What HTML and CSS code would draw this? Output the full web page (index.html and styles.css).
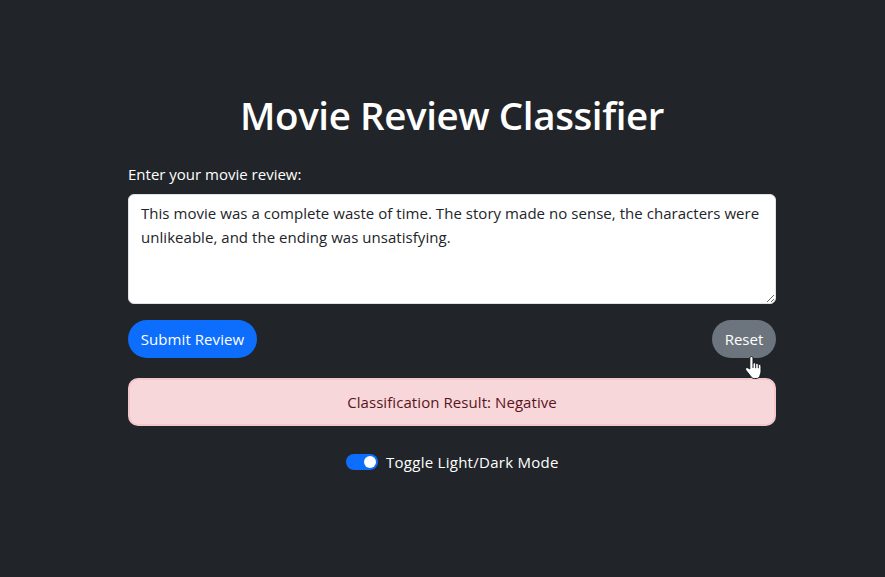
FILE: index.html
```html
<!DOCTYPE html>
<html lang="en">
<head>
<meta charset="utf-8">
<title>Movie Review Classifier</title>
<link rel="stylesheet" href="styles.css">
</head>
<body>
<main class="container">
  <h1>Movie Review Classifier</h1>
  <label class="form-label" for="review">Enter your movie review:</label>
  <textarea id="review" class="form-control" spellcheck="false">This movie was a complete waste of time. The story made no sense, the characters were unlikeable, and the ending was unsatisfying.</textarea>
  <div class="actions">
    <button class="btn primary" type="button">Submit Review</button>
    <button class="btn secondary" type="button">Reset</button>
  </div>
  <div class="alert">Classification Result: Negative</div>
  <div class="mode"><span class="switch"></span><span>Toggle Light/Dark Mode</span></div>
</main>
<svg class="pointer" width="18" height="26" viewBox="0 0 18 26" aria-hidden="true">
  <path d="M4.800 14V3.200c0-2.200 3.200-2.200 3.200 0v5.100c.7-.8 2.500-.6 2.700.6.800-.8 2.400-.4 2.600.7.900-.7 2.700-.2 2.700 1.400v5.500c0 1.700-.7 2.700-1 3.900-.4 1.900-1.900 3.100-3.800 3.100H9.300c-1.700 0-2.800-.9-3.500-2.100L.9 15.200c-1.200-2 .8-3.400 2.200-2.300z" fill="#fff" stroke="#15181b" stroke-width="1"/>
  <path d="M8 8v5M10.700 9v4.200M13.300 9.800v3.400" fill="none" stroke="#15181b" stroke-width="1"/>
</svg>
</body>
</html>
```
FILE: styles.css
```css
* { box-sizing: border-box; }
body {
  margin: 0;
  height: 577px;
  overflow: hidden;
  background: #212529;
  color: #fff;
  font: 15px/24px "Open Sans", "Noto Sans", sans-serif;
}
.container { width: 648px; margin: 0 0 0 128px; padding-top: 91px; }
h1 {
  margin: 0 0 23px;
  font-size: 38.5px;
  line-height: 48px;
  font-weight: 600;
  letter-spacing: -0.4px;
  text-align: center;
  white-space: nowrap;
}
.form-label { display: block; margin-bottom: 8px; }
.form-control {
  display: block;
  width: 100%;
  height: 110px;
  padding: 6px 12px;
  border: 1px solid #dee2e6;
  border-radius: 6px;
  background: #fff;
  color: #212529;
  font: inherit;
  letter-spacing: 0.04px;
  outline: 0;
  resize: vertical;
}
.actions { display: flex; justify-content: space-between; margin-top: 16px; }
.btn {
  height: 38px;
  padding: 0;
  border: 0;
  border-radius: 19px;
  color: #fff;
  font: inherit;
  white-space: nowrap;
}
.primary { width: 129px; background: #0d6efd; letter-spacing: 0.07px; }
.secondary { width: 64px; background: #6c757d; }
.alert {
  height: 48px;
  margin-top: 20px;
  padding: 11px 0;
  border: 2px solid #f1c7cb;
  border-radius: 10px;
  background: #f8d7da;
  color: #58151c;
  line-height: 22px;
  letter-spacing: 0.07px;
  text-align: center;
}
.mode {
  display: flex;
  align-items: center;
  gap: 8px;
  margin: 24px 0 0 218px;
  letter-spacing: 0.27px;
  white-space: nowrap;
}
.switch {
  display: flex;
  justify-content: flex-end;
  align-items: center;
  width: 32px;
  height: 16px;
  padding: 0 2px;
  border-radius: 8px;
  background: #0d6efd;
}
.switch::after { content: ""; width: 12px; height: 12px; border-radius: 50%; background: #fff; }
.pointer { position: absolute; left: 745px; top: 355px; }
```
